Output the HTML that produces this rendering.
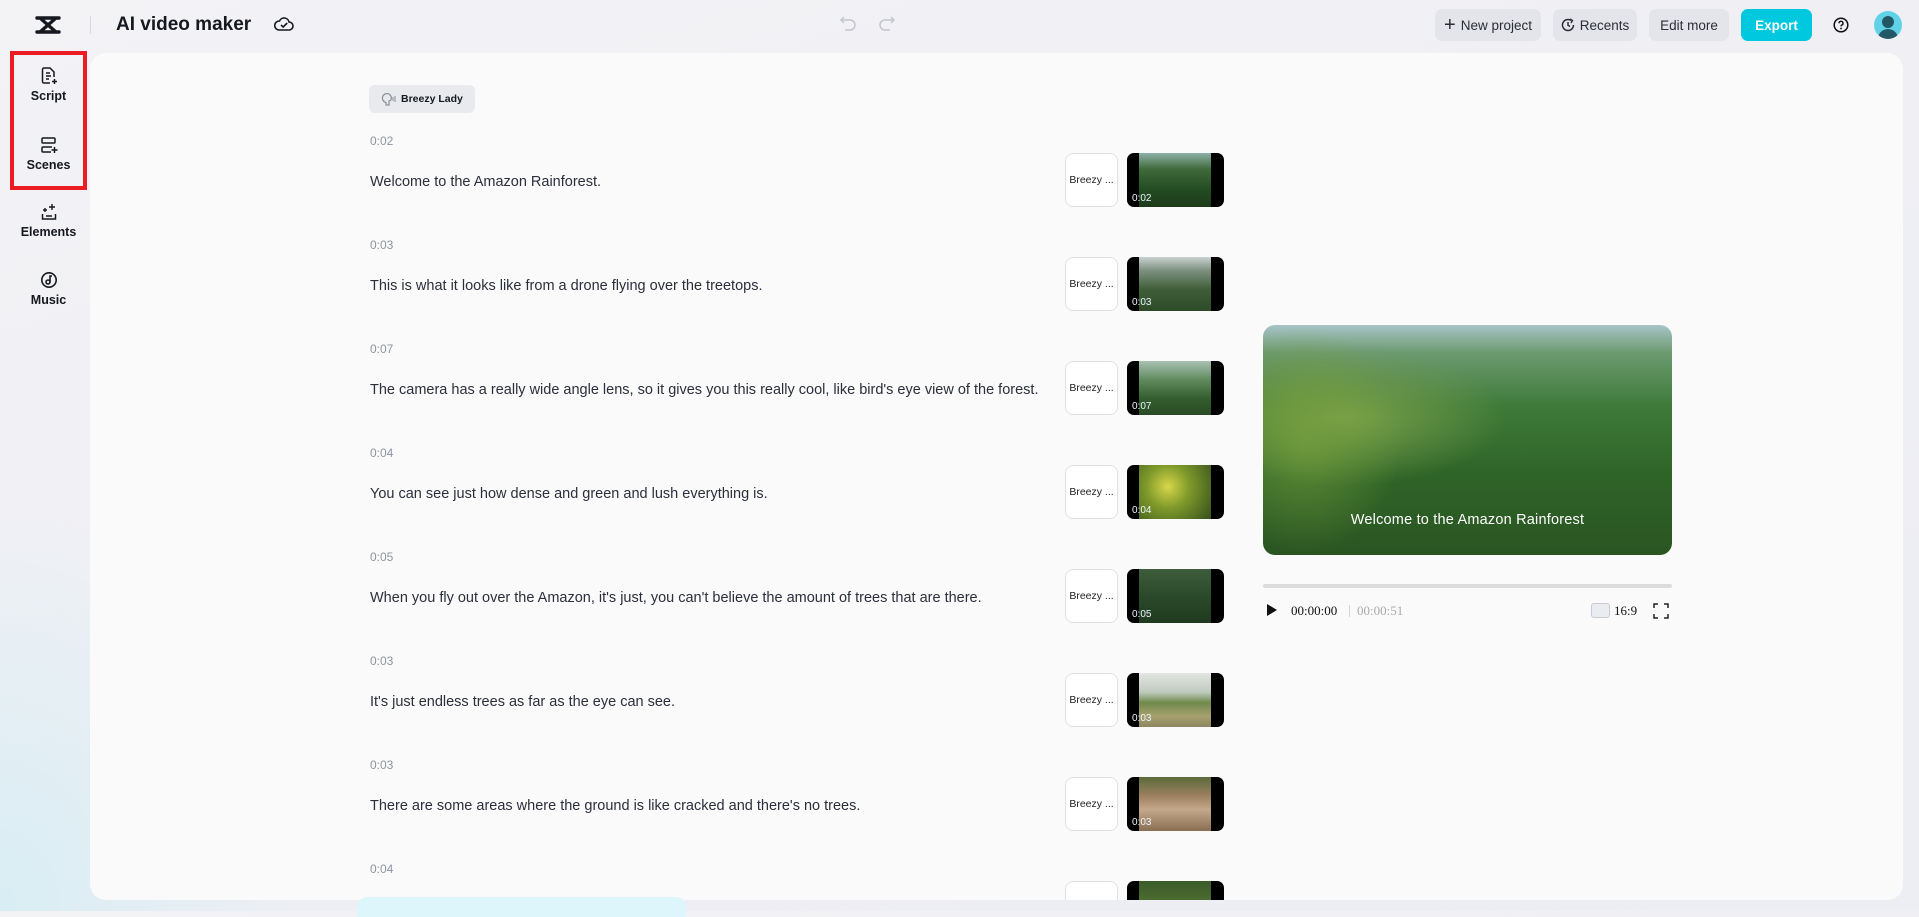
<!DOCTYPE html>
<html><head><meta charset="utf-8"><style>
*{margin:0;padding:0;box-sizing:border-box}
body{width:1919px;height:911px;overflow:hidden;position:relative;font-family:"Liberation Sans",sans-serif;background:linear-gradient(160deg,#f3f3f6 0%,#efeff4 50%,#eceef4 100%);color:#1b1f27}
.abs{position:absolute}
.lbg{position:absolute;left:0;top:500px;width:300px;height:411px;background:radial-gradient(ellipse at 0% 100%,#d8eef4 0%,rgba(230,240,246,0) 70%)}
.card{position:absolute;left:90px;top:53px;width:1813px;height:847px;background:#fafafb;border-radius:16px;overflow:hidden}
.nav{position:absolute;left:10px;width:77px;text-align:center;font-size:12.5px;font-weight:bold;color:#15181e}
.nav svg{display:block;margin:0 auto 4px}
.btn{position:absolute;top:9px;height:32px;border-radius:7px;background:#e3e5ea;font-size:13.5px;color:#2a2d33;display:flex;align-items:center;justify-content:center;gap:5px}
.ts{position:absolute;left:280px;font-size:12px;color:#8e95a2;font-family:"Liberation Sans Narrow","Liberation Sans",sans-serif}
.tx{position:absolute;left:280px;font-size:14.5px;color:#2a2f3a}
.bz{position:absolute;left:975px;width:53px;height:54px;border:1px solid #dfe2e6;border-radius:8px;background:#fff;font-size:10.5px;display:flex;align-items:center;justify-content:center;color:#222}
.th{position:absolute;left:1037px;width:97px;height:54px;border-radius:7px;background:#000;overflow:hidden}
.th i{position:absolute;left:12px;top:0;width:72px;height:54px}
.th b{position:absolute;left:5px;bottom:3px;font-size:10px;color:#e8f6ff;font-weight:normal}
</style></head><body>
<div class="lbg"></div>
<svg class="abs" style="left:35px;top:15px" width="26" height="20" viewBox="0 0 26 20"><path d="M2 3h22M2 17h22M5 3l16 14M21 3L5 17" stroke="#15181e" stroke-width="3.4" fill="none" stroke-linecap="round"/></svg>
<div class="abs" style="left:90px;top:16px;width:1px;height:18px;background:#d8d9de"></div>
<div class="abs" style="left:116px;top:14px;font-size:19px;font-weight:bold;color:#15181e">AI video maker</div>
<svg class="abs" style="left:274px;top:15px" width="20" height="18" viewBox="0 0 20 18"><path d="M5 15h10a4 4 0 0 0 0-8 5 5 0 0 0-9.5-1A4.5 4.5 0 0 0 5 15z" stroke="#15181e" stroke-width="1.6" fill="none"/><path d="M7 10l2.2 2 4-4" stroke="#15181e" stroke-width="1.6" fill="none"/></svg>
<svg class="abs" style="left:839px;top:15px" width="18" height="16" viewBox="0 0 18 16"><path d="M5 2L2 5l3 3M2 5h9a5 5 0 0 1 0 10H6" stroke="#c3c6cc" stroke-width="1.5" fill="none"/></svg>
<svg class="abs" style="left:878px;top:15px" width="18" height="16" viewBox="0 0 18 16"><path d="M13 2l3 3-3 3M16 5H7a5 5 0 0 0 0 10h5" stroke="#c3c6cc" stroke-width="1.5" fill="none"/></svg>
<div class="btn" style="left:1435px;width:106px"><span style="font-size:20px;font-weight:300;line-height:1">+</span>New project</div>
<div class="btn" style="left:1553px;width:84px"><svg width="14" height="14" viewBox="0 0 14 14"><path d="M12.5 7A5.5 5.5 0 1 1 10 2.4M7 4v3.2l2 1.3" stroke="#2a2d33" stroke-width="1.5" fill="none"/><path d="M9 1l2.5 1.5L10 5" stroke="#2a2d33" stroke-width="1.4" fill="none"/></svg>Recents</div>
<div class="btn" style="left:1649px;width:80px">Edit more</div>
<div class="btn" style="left:1741px;width:71px;background:#00c8df;color:#fff;font-weight:bold">Export</div>
<svg class="abs" style="left:1833px;top:17px" width="16" height="16" viewBox="0 0 16 16"><circle cx="8" cy="8" r="6.8" stroke="#111" stroke-width="1.5" fill="none"/><path d="M6 6.3a2 2 0 1 1 2.6 1.9c-.5.2-.6.6-.6 1.2" stroke="#111" stroke-width="1.4" fill="none"/><circle cx="8" cy="11.5" r=".9" fill="#111"/></svg>
<div class="abs" style="left:1874px;top:11px;width:28px;height:28px;border-radius:50%;background:#5fd2e8;overflow:hidden"><div class="abs" style="left:8px;top:5px;width:12px;height:12px;border-radius:50%;background:#225866"></div><div class="abs" style="left:4px;top:18px;width:20px;height:14px;border-radius:10px 10px 0 0;background:#225866"></div></div>
<div class="abs" style="left:10px;top:51px;width:77px;height:139px;border:4px solid #ec1c24"></div>
<div class="nav" style="top:67px"><svg width="18" height="18" viewBox="0 0 18 18"><path d="M10 16H4a1.5 1.5 0 0 1-1.5-1.5v-12A1.5 1.5 0 0 1 4 1h6l4 4v5M6 6h4M6 9h5M6 12h3" stroke="#15181e" stroke-width="1.5" fill="none"/><path d="M14.5 12v5M12 14.5h5" stroke="#15181e" stroke-width="1.5"/></svg>Script</div>
<div class="nav" style="top:136px"><svg width="18" height="18" viewBox="0 0 18 18"><rect x="2" y="2" width="13" height="5" rx="1" stroke="#15181e" stroke-width="1.5" fill="none"/><path d="M11 16H3a1 1 0 0 1-1-1v-3a1 1 0 0 1 1-1h9" stroke="#15181e" stroke-width="1.5" fill="none"/><path d="M14.5 11v6M11.5 14h6" stroke="#15181e" stroke-width="1.5"/></svg>Scenes</div>
<div class="nav" style="top:203px"><svg width="18" height="18" viewBox="0 0 18 18"><path d="M2.5 11v5h13v-5M6 13h6" stroke="#15181e" stroke-width="1.5" fill="none"/><path d="M12 1v6M9 4h6M5 5v4M3 7h4" stroke="#15181e" stroke-width="1.4"/></svg>Elements</div>
<div class="nav" style="top:271px"><svg width="18" height="18" viewBox="0 0 18 18"><circle cx="9" cy="9" r="7.2" stroke="#15181e" stroke-width="1.6" fill="none"/><circle cx="8" cy="11" r="2" stroke="#15181e" stroke-width="1.6" fill="none"/><path d="M10 11V5h2" stroke="#15181e" stroke-width="1.6" fill="none"/></svg>Music</div>
<div class="card">
<div class="abs" style="left:279px;top:32px;width:106px;height:28px;border-radius:6px;background:#e8eaee;font-size:10.5px;font-weight:bold;display:flex;align-items:center;padding-left:12px;gap:4px;color:#15181e"><svg width="16" height="14" viewBox="0 0 16 14"><path d="M5 13v-2.5A4.5 4.5 0 1 1 10 8l-2 1v4z" stroke="#8a8f98" stroke-width="1.2" fill="none"/><path d="M12 5v4M14 4v6" stroke="#8a8f98" stroke-width="1"/></svg>Breezy Lady</div>

<div class="ts" style="top:81px">0:02</div><div class="tx" style="top:121px">Welcome to the Amazon Rainforest.</div>
<div class="bz" style="top:100px">Breezy ...</div><div class="th" style="top:100px"><i style="background:linear-gradient(180deg,#8fb0a8 0%,#3e6a3a 30%,#234a22 70%,#1d3b1a 100%)"></i><b>0:02</b></div>

<div class="ts" style="top:185px">0:03</div><div class="tx" style="top:225px">This is what it looks like from a drone flying over the treetops.</div>
<div class="bz" style="top:204px">Breezy ...</div><div class="th" style="top:204px"><i style="background:linear-gradient(180deg,#c9d2d0 0%,#7d9080 25%,#3f5e38 60%,#2e4b29 100%)"></i><b>0:03</b></div>

<div class="ts" style="top:289px">0:07</div><div class="tx" style="top:329px">The camera has a really wide angle lens, so it gives you this really cool, like bird's eye view of the forest.</div>
<div class="bz" style="top:308px">Breezy ...</div><div class="th" style="top:308px"><i style="background:linear-gradient(180deg,#a9c1b4 0%,#5f8a5d 35%,#345d2f 70%,#2a4b24 100%)"></i><b>0:07</b></div>

<div class="ts" style="top:393px">0:04</div><div class="tx" style="top:433px">You can see just how dense and green and lush everything is.</div>
<div class="bz" style="top:412px">Breezy ...</div><div class="th" style="top:412px"><i style="background:radial-gradient(circle at 40% 40%,#d8d64a 0%,#7f9a2a 40%,#35501c 100%)"></i><b>0:04</b></div>

<div class="ts" style="top:497px">0:05</div><div class="tx" style="top:537px">When you fly out over the Amazon, it's just, you can't believe the amount of trees that are there.</div>
<div class="bz" style="top:516px">Breezy ...</div><div class="th" style="top:516px"><i style="background:linear-gradient(180deg,#3d5d3c 0%,#2b4a2a 50%,#203a1f 100%)"></i><b>0:05</b></div>

<div class="ts" style="top:601px">0:03</div><div class="tx" style="top:641px">It's just endless trees as far as the eye can see.</div>
<div class="bz" style="top:620px">Breezy ...</div><div class="th" style="top:620px"><i style="background:linear-gradient(180deg,#e3e6e2 0%,#c0cbc0 35%,#6f8a4a 55%,#a8a070 80%,#8c8660 100%)"></i><b>0:03</b></div>

<div class="ts" style="top:705px">0:03</div><div class="tx" style="top:745px">There are some areas where the ground is like cracked and there's no trees.</div>
<div class="bz" style="top:724px">Breezy ...</div><div class="th" style="top:724px"><i style="background:linear-gradient(180deg,#5a6a3a 0%,#9d8060 35%,#c4a88a 60%,#8a6e52 100%)"></i><b>0:03</b></div>

<div class="ts" style="top:809px">0:04</div>
<div class="bz" style="top:828px"></div><div class="th" style="top:828px"><i style="background:linear-gradient(180deg,#3a5a2a,#6a8a3a)"></i></div>

<div class="abs" style="left:1173px;top:272px;width:409px;height:230px;border-radius:12px;overflow:hidden;background:radial-gradient(ellipse at 20% 40%,#7aa04a 0%,rgba(90,130,60,0) 35%),linear-gradient(180deg,#a8c4c8 0%,#6c9a70 12%,#3f7a3a 35%,#2f6428 65%,#2a5522 100%)">
<div class="abs" style="left:0;top:0;width:140px;height:230px;background:radial-gradient(ellipse at 30% 50%,rgba(120,160,60,.7),rgba(60,100,40,0) 70%)"></div>
<div class="abs" style="left:0;width:409px;top:187px;text-align:center;color:#fff;font-size:14.5px;letter-spacing:.2px">Welcome to the Amazon Rainforest</div>
</div>
<div class="abs" style="left:1173px;top:531px;width:409px;height:4px;border-radius:2px;background:#dcdcdc"></div>
<svg class="abs" style="left:1176px;top:550px" width="12" height="14" viewBox="0 0 12 14"><path d="M1 1l10 6-10 6z" fill="#111"/></svg>
<div class="abs" style="left:1201px;top:550px;font-family:'Liberation Serif',serif;font-size:13px;color:#111">00:00:00</div>
<div class="abs" style="left:1259px;top:552px;width:1px;height:12px;background:#d6d6d6"></div>
<div class="abs" style="left:1267px;top:550px;font-family:'Liberation Serif',serif;font-size:13px;color:#aaa">00:00:51</div>
<div class="abs" style="left:1501px;top:550px;width:19px;height:15px;border:1px solid #c8ccd2;border-radius:3px;background:#e9ecf0"></div>
<div class="abs" style="left:1524px;top:550px;font-family:'Liberation Serif',serif;font-size:13px;color:#111">16:9</div>
<svg class="abs" style="left:1563px;top:550px" width="16" height="16" viewBox="0 0 16 16"><path d="M1 5V1h4M11 1h4v4M15 11v4h-4M5 15H1v-4" stroke="#222" stroke-width="1.5" fill="none"/></svg>
</div>
<div class="abs" style="left:357px;top:897px;width:329px;height:20px;border-radius:10px 10px 0 0;background:#ddf6fb"></div>
</body></html>
